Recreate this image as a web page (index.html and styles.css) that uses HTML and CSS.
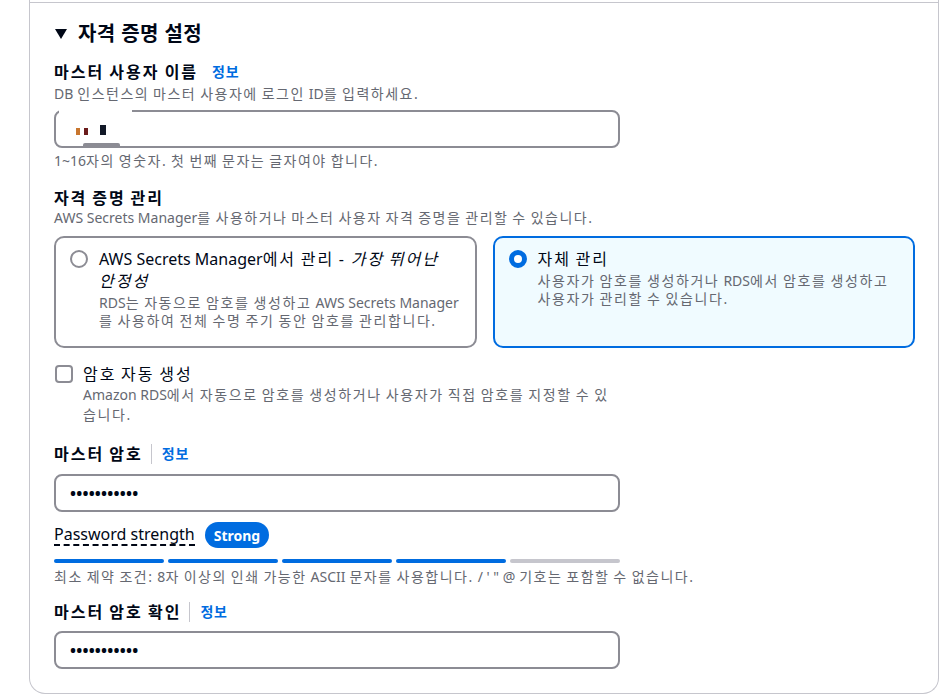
FILE: index.html
```html
<!DOCTYPE html>
<html lang="ko">
<head>
<meta charset="utf-8">
<title>자격 증명 설정</title>
<link rel="stylesheet" href="styles.css">
</head>
<body>
<div class="page">
  <div class="card">
    <div class="card-prev"></div>
    <div class="card-body">
      <h2 class="section-title">
        <svg class="caret" width="12" height="10" viewBox="0 0 12 10"><polygon points="0,0 12,0 6,10" fill="#000716"/></svg>
        <span>자격 증명 설정</span>
      </h2>

      <div class="field-label first">
        <span>마스터 사용자 이름</span>
        <a class="info info-wide">정보</a>
      </div>
      <div class="desc"><span class="en">DB</span> 인스턴스의 마스터 사용자에 로그인 <span class="en">ID</span>를 입력하세요.</div>
      <div class="input user-input">
        <span class="redact r1"></span><span class="redact r2"></span><span class="redact r3"></span>
        <span class="patch-top"></span>
        <span class="patch-bottom"></span>
      </div>
      <div class="hint"><span class="en">1~16</span>자의 영숫자. 첫 번째 문자는 글자여야 합니다.</div>

      <div class="group-title">자격 증명 관리</div>
      <div class="hint tight"><span class="en">AWS Secrets Manager</span>를 사용하거나 마스터 사용자 자격 증명을 관리할 수 있습니다.</div>

      <div class="tiles">
        <div class="tile">
          <span class="radio"></span>
          <div class="tile-text">
            <div class="tile-title"><span class="en">AWS Secrets Manager</span>에서 관리 - <em>가장 뛰어난 안정성</em></div>
            <div class="tile-desc"><span class="en">RDS</span>는 자동으로 암호를 생성하고 <span class="en">AWS Secrets Manager</span>를 사용하여 전체 수명 주기 동안 암호를 관리합니다.</div>
          </div>
        </div>
        <div class="tile selected">
          <span class="radio on"></span>
          <div class="tile-text">
            <div class="tile-title">자체 관리</div>
            <div class="tile-desc">사용자가 암호를 생성하거나 <span class="en">RDS</span>에서 암호를 생성하고 사용자가 관리할 수 있습니다.</div>
          </div>
        </div>
      </div>

      <div class="check">
        <span class="box"></span>
        <div class="check-text">
          <div class="check-title">암호 자동 생성</div>
          <div class="desc"><span class="en">Amazon RDS</span>에서 자동으로 암호를 생성하거나 사용자가 직접 암호를 지정할 수 있습니다.</div>
        </div>
      </div>

      <div class="field-label pw">
        <span>마스터 암호</span>
        <span class="sep"></span>
        <a class="info">정보</a>
      </div>
      <div class="input dots-input"><span class="dots">•••••••••••</span></div>

      <div class="strength">
        <span class="strength-label">Password strength</span>
        <span class="badge">Strong</span>
      </div>
      <div class="bars">
        <span class="bar on"></span><span class="bar on"></span><span class="bar on"></span><span class="bar on"></span><span class="bar"></span>
      </div>
      <div class="hint rules">최소 제약 조건: <span class="en">8</span>자 이상의 인쇄 가능한 <span class="en">ASCII</span> 문자를 사용합니다. <span class="en">/ ' " @</span> 기호는 포함할 수 없습니다.</div>

      <div class="field-label confirm">
        <span>마스터 암호 확인</span>
        <span class="sep"></span>
        <a class="info">정보</a>
      </div>
      <div class="input dots-input confirm-input"><span class="dots">•••••••••••</span></div>
    </div>
  </div>
</div>
</body>
</html>
```

FILE: styles.css
```css
body {
  margin: 0;
  background: #ffffff;
  color: #000716;
  font-family: "Noto Sans", "Noto Sans CJK KR", sans-serif;
}

.page {
  padding-left: 29px;
}

.card {
  width: 910px;
  box-sizing: border-box;
  border: 1px solid #c6c6cd;
  border-top: 0;
  border-radius: 0 0 16px 16px;
}

.card-prev {
  height: 2px;
  border-bottom: 1px solid #c6c6cd;
}

.card-body {
  padding: 19px 23px 24px 24px;
}

.en {
  letter-spacing: 0;
  word-spacing: 0;
}

.section-title {
  display: flex;
  align-items: center;
  gap: 11px;
  margin: 0;
  padding-left: 1px;
  font-size: 20px;
  font-weight: 700;
  line-height: 24px;
  letter-spacing: 0.4px;
}

.caret {
  flex: none;
}

.field-label {
  display: flex;
  align-items: center;
  font-size: 16px;
  font-weight: 700;
  line-height: 22px;
  letter-spacing: 2px;
  word-spacing: -1px;
}

.field-label.first {
  margin-top: 15px;
}

.info {
  font-size: 14px;
  font-weight: 700;
  color: #006ce0;
  letter-spacing: 0.8px;
  word-spacing: 0;
}

.info-wide {
  margin-left: 14px;
}

.sep {
  width: 1px;
  height: 20px;
  background: #c6c6cd;
  margin: 0 10px 0 8px;
}

.desc {
  font-size: 14px;
  line-height: 20px;
  color: #656871;
  margin-top: 1px;
  letter-spacing: 1.5px;
  word-spacing: -1.2px;
}

.input {
  width: 566px;
  height: 38px;
  box-sizing: border-box;
  border: 2px solid #8c8c94;
  border-radius: 8px;
  margin-top: 6px;
  display: flex;
  align-items: center;
  padding: 0 14px;
}

.user-input {
  position: relative;
}

.patch-top {
  position: absolute;
  top: -2px;
  left: 3px;
  width: 73px;
  height: 3px;
  background: #ffffff;
}

.patch-bottom {
  position: absolute;
  bottom: -1px;
  left: 27px;
  width: 37px;
  height: 4px;
  background: #8c8c94;
  border-radius: 2px 2px 0 0;
}

.redact {
  display: inline-block;
  width: 4px;
  height: 7px;
  margin-right: 4px;
  margin-top: 4px;
}

.r1 { background: #c8762e; margin-left: 6px; }
.r2 { background: #6b1c1c; margin-right: 12px; }
.r3 { background: #111827; height: 10px; width: 6px; margin-top: 1px; }

.hint {
  font-size: 14px;
  line-height: 18px;
  color: #656871;
  margin-top: 4px;
  letter-spacing: 1.5px;
  word-spacing: -1.2px;
}

.hint.tight {
  margin-top: 0;
}

.group-title {
  margin-top: 17px;
  font-size: 16px;
  font-weight: 700;
  line-height: 22px;
  letter-spacing: 1.9px;
  word-spacing: -1px;
}

.tiles {
  display: grid;
  grid-template-columns: 1fr 1fr;
  gap: 16px;
  margin-top: 9px;
}

.tile {
  height: 112px;
  box-sizing: border-box;
  border: 2px solid #8c8c94;
  border-radius: 10px;
  padding: 10px 12px 10px 14px;
  display: flex;
  gap: 11px;
}

.tile.selected {
  border-color: #006ce0;
  background: #f0fbff;
}

.radio {
  flex: none;
  width: 18px;
  height: 18px;
  box-sizing: border-box;
  border: 2px solid #8c8c94;
  border-radius: 50%;
  margin-top: 2px;
}

.radio.on {
  border: 5px solid #006ce0;
  background: #ffffff;
}

.tile-title {
  font-size: 16px;
  line-height: 22px;
  letter-spacing: 2px;
  word-spacing: -1.5px;
  word-break: keep-all;
}

.tile-desc {
  font-size: 14px;
  line-height: 18px;
  color: #656871;
  margin-top: 2px;
  letter-spacing: 1.6px;
  word-spacing: -1.2px;
}

.selected .tile-desc {
  word-break: keep-all;
}

.check {
  display: flex;
  gap: 10px;
  width: 560px;
  margin-top: 15px;
}

.box {
  flex: none;
  width: 18px;
  height: 18px;
  box-sizing: border-box;
  border: 2px solid #8c8c94;
  border-radius: 4px;
  margin-top: 2px;
  margin-left: 1px;
}

.check-title {
  font-size: 16px;
  line-height: 22px;
  letter-spacing: 2px;
  word-spacing: -1.5px;
}

.check-text .desc {
  margin-top: 0;
  letter-spacing: 1.6px;
}

.field-label.pw {
  margin-top: 18px;
}

.dots-input {
  margin-top: 9px;
}

.dots {
  font-size: 16px;
  font-weight: 700;
  letter-spacing: 0.2px;
  color: #000716;
}

.strength {
  display: flex;
  align-items: center;
  gap: 10px;
  margin-top: 10px;
}

.strength-label {
  font-size: 16px;
  line-height: 20px;
  border-bottom: 2px dashed #000716;
}

.badge {
  display: inline-flex;
  align-items: center;
  height: 26px;
  padding: 0 9px;
  border-radius: 13px;
  background: #006ce0;
  color: #ffffff;
  font-size: 14px;
  font-weight: 700;
}

.bars {
  display: flex;
  gap: 4px;
  width: 566px;
  margin-top: 11px;
}

.bar {
  flex: 1;
  height: 4px;
  border-radius: 2px;
  background: #c6c6cd;
}

.bar.on {
  background: #006ce0;
}

.hint.rules {
  margin-top: 5px;
}

.field-label.confirm {
  margin-top: 15px;
}

.confirm-input {
  margin-top: 8px;
}
```
